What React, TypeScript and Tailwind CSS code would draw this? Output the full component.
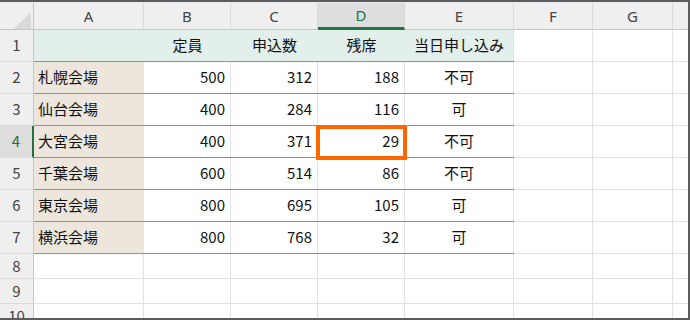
import React from 'react';

const colW = ['w-[34px]', 'w-[110px]', 'w-[87px]', 'w-[87px]', 'w-[87px]', 'w-[109px]', 'w-[79px]', 'w-[80px]', 'flex-1'];
const letters = ['A', 'B', 'C', 'D', 'E', 'F', 'G', ''];

type Row = [string, string, string, string, string];

const rows: Row[] = [
  ['', '定員', '申込数', '残席', '当日申し込み'],
  ['札幌会場', '500', '312', '188', '不可'],
  ['仙台会場', '400', '284', '116', '可'],
  ['大宮会場', '400', '371', '29', '不可'],
  ['千葉会場', '600', '514', '86', '不可'],
  ['東京会場', '800', '695', '105', '可'],
  ['横浜会場', '800', '768', '32', '可'],
];

const RowHeader = ({ n, active, h }: { n: number; active?: boolean; h: string }) => (
  <div
    className={`${colW[0]} ${h} shrink-0 flex items-center justify-center border-b border-b-[#dadada] ${
      active ? 'bg-[#dddddd] text-[#217346] border-r-2 border-r-[#217346]' : 'bg-[#efefef] text-[#444] border-r border-r-[#c6c6c6]'
    }`}
  >
    {n}
  </div>
);

const EmptyTail = ({ h }: { h: string }) => (
  <>
    <div className={`${colW[6]} ${h} shrink-0 border-r border-b border-[#e1e1e1]`} />
    <div className={`${colW[7]} ${h} shrink-0 border-r border-b border-[#e1e1e1]`} />
    <div className={`${colW[8]} ${h} border-b border-[#e1e1e1]`} />
  </>
);

export default function App() {
  return (
    <div className="w-[690px] h-[320px] overflow-hidden bg-white border-t-2 border-r-2 border-b-2 border-[#5c5c5c] font-['Noto_Sans_CJK_JP','Noto_Sans',sans-serif] text-[15px] text-[#111]">
      {/* column headers */}
      <div className="flex h-[28px] border-t border-t-[#e4ebf2]">
        <div className={`${colW[0]} shrink-0 bg-[#efefef] border-r border-b border-[#c6c6c6] relative`}>
          <svg className="absolute left-[14px] top-[9px]" width="17" height="17" viewBox="0 0 17 17">
            <polygon points="17,0 17,17 0,17" fill="#d9d9d9" />
          </svg>
        </div>
        {letters.map((l, i) => (
          <div
            key={i}
            className={`${colW[i + 1]} ${i < 7 ? 'shrink-0 border-r border-r-[#d9d9d9]' : ''} flex items-center justify-center font-['Noto_Sans',sans-serif] ${
              l === 'D'
                ? 'bg-[#dedede] text-[#217346] border-b-[3px] border-b-[#217346]'
                : 'bg-[#efefef] text-[#444] border-b border-b-[#c6c6c6]'
            }`}
          >
            {l}
          </div>
        ))}
      </div>

      {/* data rows */}
      {rows.map((r, ri) => {
        const first = ri === 0;
        return (
          <div key={ri} className="flex h-[32px]">
            <RowHeader n={ri + 1} active={ri === 3} h="h-[32px]" />
            <div className="w-[480px] shrink-0 flex flex-col">
              <div className={`flex h-[31px] ${first ? 'bg-[#e2efea]' : ''}`}>
                <div className={`${colW[1]} shrink-0 flex items-center pl-[4px] ${first ? '' : 'bg-[#ede6dc]'}`}>
                  {r[0]}
                </div>
                {[1, 2, 3].map((c) => (
                  <div
                    key={c}
                    className={`${colW[c + 1]} shrink-0 relative flex items-center ${
                      first ? 'justify-center' : 'justify-end pr-[5px] border-r border-[#e1e1e1]'
                    }`}
                  >
                    {r[c]}
                    {ri === 3 && c === 3 && (
                      <div className="absolute left-[-2px] top-[-1px] w-[91px] h-[35px] border-4 border-[#ff6600] z-10" />
                    )}
                  </div>
                ))}
                <div className={`${colW[5]} shrink-0 flex items-center justify-center border-r border-[#e1e1e1]`}>
                  {r[4]}
                </div>
              </div>
              <div className="h-px bg-[#62a98b]" />
            </div>
            <EmptyTail h="h-[32px]" />
          </div>
        );
      })}

      {/* empty rows */}
      {[8, 9, 10].map((n) => (
        <div key={n} className="flex h-[25px]">
          <RowHeader n={n} h="h-[25px]" />
          {[1, 2, 3, 4, 5].map((c) => (
            <div key={c} className={`${colW[c]} h-[25px] shrink-0 border-r border-b border-[#e1e1e1]`} />
          ))}
          <EmptyTail h="h-[25px]" />
        </div>
      ))}
    </div>
  );
}
